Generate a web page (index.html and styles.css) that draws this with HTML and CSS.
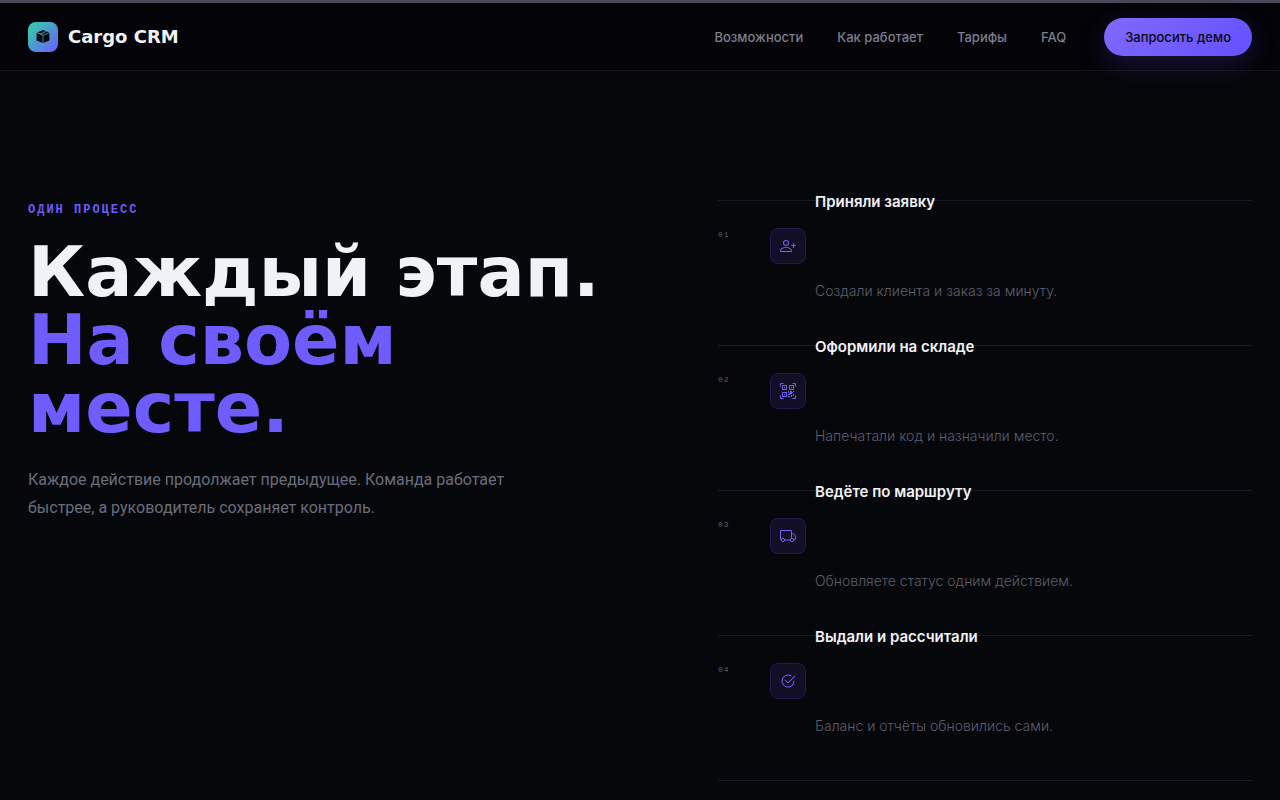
FILE: index.html
```html
<!DOCTYPE html>
<html lang="ru">
<head>
<meta charset="utf-8">
<meta name="viewport" content="width=device-width, initial-scale=1">
<title>Cargo CRM</title>
<link rel="stylesheet" href="styles.css">
</head>
<body>
<header class="header">
  <a class="brand" href="#">
    <span class="brand-mark">
      <svg width="14" height="14" viewBox="0 0 14 14" aria-hidden="true">
        <path fill="#07080c" d="M7 0 10 1.200 4.200 3.500 1.200 2.400zM11 1.600 13 2.400 7 4.800 5.200 4.100zM.6 3.100 6.600 5.500V13L.6 10.600zM13.400 3.100V10.600L7.400 13V5.500z"/>
      </svg>
    </span>
    <span class="brand-name">Cargo CRM</span>
  </a>
  <nav class="nav">
    <a href="#features">Возможности</a>
    <a href="#process">Как работает</a>
    <a href="#pricing">Тарифы</a>
    <a href="#faq">FAQ</a>
  </nav>
  <button class="demo" type="button">Запросить демо</button>
</header>
<main class="process" id="process">
  <section class="intro">
    <p class="eyebrow">ОДИН ПРОЦЕСС</p>
    <h1 class="title">Каждый этап. <span class="accent">На своём месте.</span></h1>
    <p class="lead">Каждое действие продолжает предыдущее. Команда работает быстрее, а руководитель сохраняет контроль.</p>
  </section>
  <ol class="steps">
    <li class="step">
      <span class="num">01</span>
      <span class="icon">
        <svg width="16" height="16" viewBox="0 0 16 16" fill="currentColor" aria-hidden="true"><path d="M6 8a3 3 0 1 0 0-6 3 3 0 0 0 0 6m2-3a2 2 0 1 1-4 0 2 2 0 0 1 4 0m4 8c0 1-1 1-1 1H1s-1 0-1-1 1-4 6-4 6 3 6 4m-1-.004c-.001-.246-.154-.986-.832-1.664C9.516 10.680 8.289 10 6 10s-3.516.680-4.168 1.332c-.678.678-.830 1.418-.832 1.664z"/><path d="M13.500 5a.5.5 0 0 1 .5.5V7h1.500a.5.5 0 0 1 0 1H14v1.500a.5.5 0 0 1-1 0V8h-1.500a.5.5 0 0 1 0-1H13V5.500a.5.5 0 0 1 .5-.5"/></svg>
      </span>
      <div class="step-text">
        <h2>Приняли заявку</h2>
        <p>Создали клиента и заказ за минуту.</p>
      </div>
    </li>
    <li class="step">
      <span class="num">02</span>
      <span class="icon">
        <svg width="16" height="16" viewBox="0 0 16 16" fill="none" stroke="currentColor" aria-hidden="true"><path d="M.5 3.500V.5h3M12.500.5h3v3M.5 12.500v3h3M12.500 15.500h3v-3M2.500 2.500h4v4h-4zM9.500 2.500h4v4h-4zM2.500 9.500h4v4h-4z"/><path fill="currentColor" stroke="none" d="M4 4h1v1H4zM11 4h1v1h-1zM4 11h1v1H4zM8 8h1v2H8zM10 8h2v1h1v1h-1v1h-2v1H8v-1h1v-1h1zM13 8h1v1h-1zM8 13h2v1H8zM11 12h1v2h-1zM13 11h1v2h-1z"/></svg>
      </span>
      <div class="step-text">
        <h2>Оформили на складе</h2>
        <p>Напечатали код и назначили место.</p>
      </div>
    </li>
    <li class="step">
      <span class="num">03</span>
      <span class="icon">
        <svg width="16" height="16" viewBox="0 0 16 16" fill="none" stroke="currentColor" aria-hidden="true"><path d="M1.300 11.500H.5v-9h11v7.700M4.700 12h5.600M11.500 5.500h1.200q2.800.5 2.800 3.500v2.500h-1.800"/><circle cx="3" cy="12" r="1.600"/><circle cx="12" cy="12" r="1.600"/></svg>
      </span>
      <div class="step-text">
        <h2>Ведёте по маршруту</h2>
        <p>Обновляете статус одним действием.</p>
      </div>
    </li>
    <li class="step">
      <span class="num">04</span>
      <span class="icon">
        <svg width="16" height="16" viewBox="0 0 16 16" fill="currentColor" aria-hidden="true"><path d="M2.500 8a5.500 5.500 0 0 1 8.250-4.764.5.5 0 0 0 .5-.866A6.500 6.500 0 1 0 14.500 8a.5.5 0 0 0-1 0 5.500 5.500 0 1 1-11 0"/><path d="M15.354 3.354a.5.5 0 0 0-.708-.708L8 9.293 5.354 6.646a.5.5 0 1 0-.708.708l3 3a.5.5 0 0 0 .708 0z"/></svg>
      </span>
      <div class="step-text">
        <h2>Выдали и рассчитали</h2>
        <p>Баланс и отчёты обновились сами.</p>
      </div>
    </li>
  </ol>
</main>
</body>
</html>
```

FILE: styles.css
```css
* {
  box-sizing: border-box;
}

body {
  margin: 0;
  background: #06070b;
  color: #f1f2f7;
  font-family: Inter, "Noto Sans", sans-serif;
}

h1, h2, p, ol {
  margin: 0;
  padding: 0;
  font-weight: inherit;
}

a {
  color: inherit;
  text-decoration: none;
}

.header {
  display: flex;
  align-items: center;
  padding: 15px 28px 14px;
  border-top: 3px solid #484a57;
  border-bottom: 1px solid #111318;
  background: #040308;
}

.brand {
  display: flex;
  align-items: center;
  gap: 10px;
  margin-right: auto;
}

.brand-mark {
  display: grid;
  place-items: center;
  width: 30px;
  height: 30px;
  border-radius: 8px;
  background: linear-gradient(135deg, #2fd6a3, #6c5cff);
}

.brand-name {
  font: bold 18px/20px "DejaVu Sans", sans-serif;
}

.nav {
  display: flex;
  gap: 34px;
  margin-right: 38px;
  color: #7c7f8e;
  font-size: 13px;
  font-weight: 500;
}

.demo {
  height: 38px;
  padding: 0 21px;
  border: 0;
  border-radius: 19px;
  background: linear-gradient(135deg, #8069ff, #6450ff);
  box-shadow: 0 8px 28px rgba(108, 92, 255, 0.2);
  color: #07080c;
  font: 500 13px/20px Inter, "Noto Sans", sans-serif;
}

.process {
  display: grid;
  grid-template-columns: 590fr 534fr;
  gap: 100px;
  padding: 129px 28px 19px;
}

.eyebrow {
  color: #6c5cff;
  font: bold 12px/20px "Liberation Mono", monospace;
  letter-spacing: 2px;
}

.title {
  margin-top: 18px;
  font: bold 70px/68px "DejaVu Sans", sans-serif;
}

.accent {
  display: block;
  max-width: 480px;
  color: #6f5cff;
}

.lead {
  max-width: 500px;
  margin-top: 24px;
  color: #6a6d7b;
  font-family: Roboto, "Noto Sans", sans-serif;
  font-size: 16px;
  font-weight: 400;
  line-height: 28px;
}

.steps {
  border-bottom: 1px solid #191a21;
  list-style: none;
}

.step {
  display: grid;
  grid-template-columns: 52px 36px 1fr;
  align-items: start;
  padding: 27px 0;
  border-top: 1px solid #191a21;
}

.num {
  padding-top: 2px;
  color: #5a5d6a;
  font: 8px/10px "Liberation Mono", monospace;
  letter-spacing: 1px;
}

.icon {
  display: grid;
  place-items: center;
  height: 36px;
  border: 1px solid #211b50;
  border-radius: 8px;
  background: #110e25;
  color: #7662ee;
}

/* The heading sits on the divider line, the description hangs below the icon. */
.step-text {
  display: grid;
  gap: 67px;
  margin: -37px 0 16px;
  padding-left: 9px;
}

.step-text h2 {
  font-size: 15px;
  font-weight: 600;
  line-height: 22px;
}

.step-text p {
  color: #5c5f6e;
  font-size: 14px;
  font-weight: 300;
  line-height: 22px;
}

@media (max-width: 800px) {
  .header {
    flex-wrap: wrap;
    gap: 16px;
  }

  .process {
    grid-template-columns: 1fr;
  }

  .title {
    font-size: 44px;
    line-height: 48px;
  }
}
```
